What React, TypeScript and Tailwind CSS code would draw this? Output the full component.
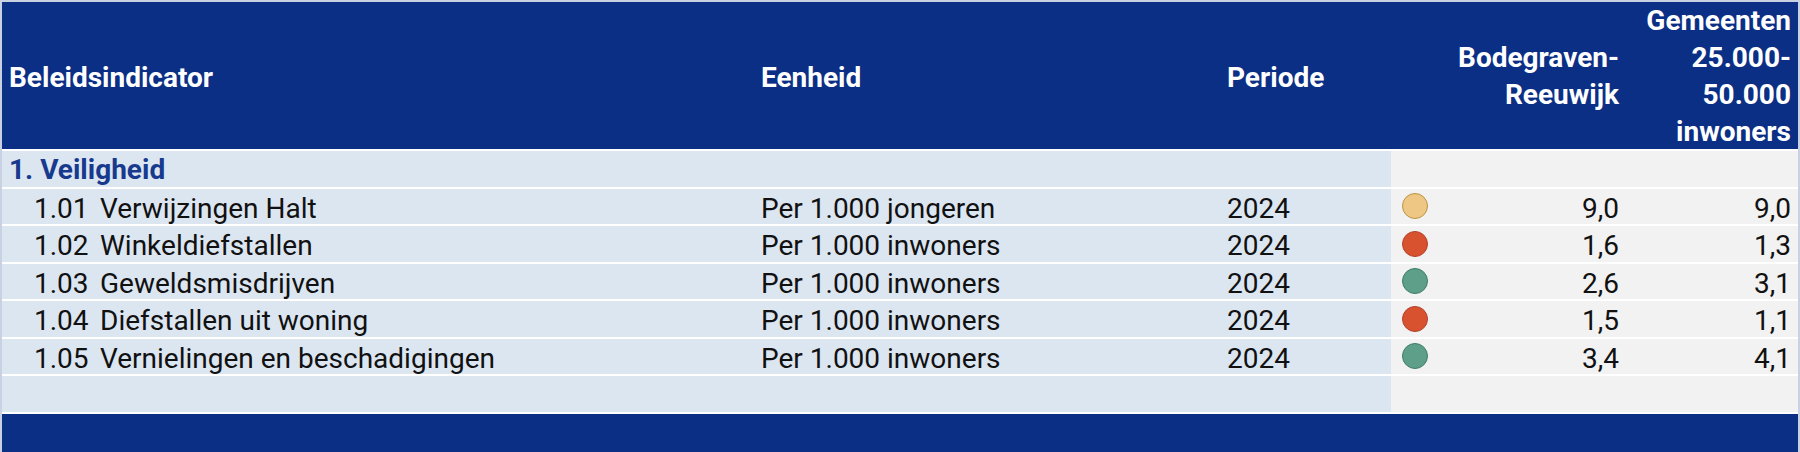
import React from "react";

type Status = "geel" | "rood" | "groen";

interface Indicator {
  code: string;
  name: string;
  unit: string;
  period: string;
  status: Status;
  value: string;
  reference: string;
}

const indicators: Indicator[] = [
  { code: "1.01", name: "Verwijzingen Halt", unit: "Per 1.000 jongeren", period: "2024", status: "geel", value: "9,0", reference: "9,0" },
  { code: "1.02", name: "Winkeldiefstallen", unit: "Per 1.000 inwoners", period: "2024", status: "rood", value: "1,6", reference: "1,3" },
  { code: "1.03", name: "Geweldsmisdrijven", unit: "Per 1.000 inwoners", period: "2024", status: "groen", value: "2,6", reference: "3,1" },
  { code: "1.04", name: "Diefstallen uit woning", unit: "Per 1.000 inwoners", period: "2024", status: "rood", value: "1,5", reference: "1,1" },
  { code: "1.05", name: "Vernielingen en beschadigingen", unit: "Per 1.000 inwoners", period: "2024", status: "groen", value: "3,4", reference: "4,1" },
];

const dotClass: Record<Status, string> = {
  geel: "bg-[#efc785] border-[#b99440]",
  rood: "bg-[#d8522f] border-[#b2412a]",
  groen: "bg-[#5e9f89] border-[#3f7d68]",
};

const cols = "grid grid-cols-[750px_466px_173px_236px_1fr]";

function StatusDot({ status }: { status: Status }) {
  return <div className={`ml-[11px] h-[26px] w-[26px] rounded-full border-[1.5px] ${dotClass[status]}`} />;
}

export default function App() {
  return (
    <div className="h-[452px] w-[1800px] overflow-hidden bg-white font-['Roboto',sans-serif] text-[28px] text-[#111]">
      <div className="flex h-full flex-col gap-[2px] border-x-2 border-t-2 border-[#c9d2e3]">
        {/* header */}
        <div className={`${cols} h-[147px] shrink-0 bg-[#0c2f86] font-bold text-white`}>
          <div className="flex items-center pl-[7px] pt-[4px]">Beleidsindicator</div>
          <div className="flex items-center pl-[9px] pt-[4px]">Eenheid</div>
          <div className="flex items-center pl-[9px] pt-[4px]">Periode</div>
          <div className="flex items-center justify-end pr-[8px] text-right leading-[37px]">
            <div>
              Bodegraven-
              <br />
              Reeuwijk
            </div>
          </div>
          <div className="flex items-center justify-end pr-[7px] text-right leading-[37px]">
            <div>
              Gemeenten
              <br />
              25.000-
              <br />
              50.000
              <br />
              inwoners
            </div>
          </div>
        </div>

        {/* category */}
        <div className={`${cols} h-[35.5px] shrink-0 leading-none`}>
          <div className="col-span-3 flex items-center bg-[#dce6f1] pl-[7px] pt-[2px] font-bold text-[#183a8e]">
            1. Veiligheid
          </div>
          <div className="col-span-2 bg-[#f2f2f2]" />
        </div>

        {indicators.map((row) => (
          <div key={row.code} className={`${cols} h-[35.5px] shrink-0 leading-none`}>
            <div className="flex items-center bg-[#dce6f1] pl-[32px] pt-[5px] whitespace-nowrap">
              <span className="w-[66px]">{row.code}</span>
              <span>{row.name}</span>
            </div>
            <div className="flex items-center bg-[#dce6f1] pl-[9px] pt-[5px]">{row.unit}</div>
            <div className="flex items-center bg-[#dce6f1] pl-[9px] pt-[5px]">{row.period}</div>
            <div className="flex items-center justify-between bg-[#f2f2f2] pr-[8px]">
              <StatusDot status={row.status} />
              <span className="pt-[5px]">{row.value}</span>
            </div>
            <div className="flex items-center justify-end bg-[#f2f2f2] pr-[7px] pt-[5px]">{row.reference}</div>
          </div>
        ))}

        {/* empty row */}
        <div className={`${cols} h-[35.5px] shrink-0`}>
          <div className="col-span-3 bg-[#dce6f1]" />
          <div className="col-span-2 bg-[#f2f2f2]" />
        </div>

        {/* footer */}
        <div className="flex-1 bg-[#0c2f86]" />
      </div>
    </div>
  );
}
